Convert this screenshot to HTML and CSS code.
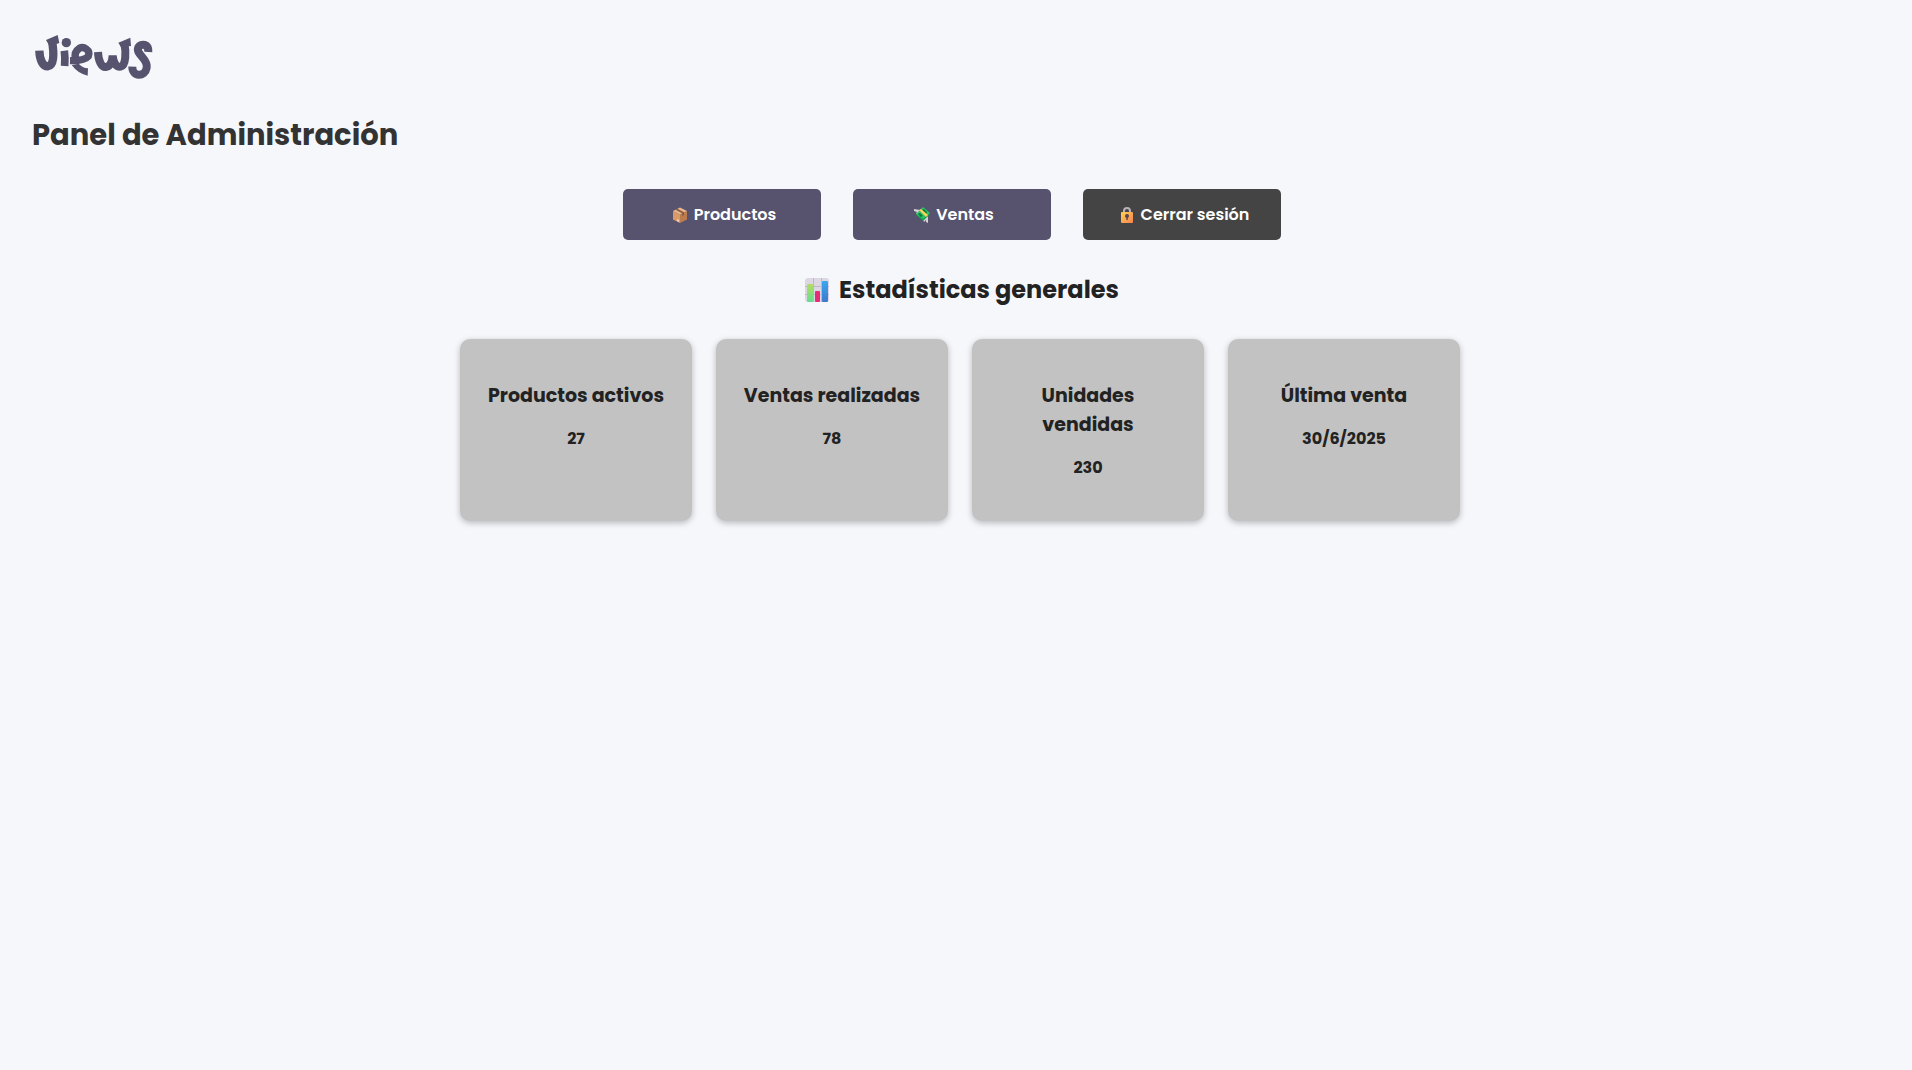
FILE: index.html
```
<!DOCTYPE html>
<html lang="es">
<head>
<meta charset="utf-8">
<meta name="viewport" content="width=device-width, initial-scale=1">
<title>Panel de Administración</title>
<link rel="stylesheet" href="styles.css">
</head>
<body>
<header class="header">
  <svg class="logo" viewBox="0 0 390 150" role="img" aria-label="Views">
    <g fill="none" stroke="currentColor" stroke-width="25">
      <path d="M22 56C23 84 32 103 47 103C66 101 67 68 60 26"/>
      <path d="M97 56Q100 78 98 102" stroke-width="23"/>
      <path d="M114 86Q158 87 169 73C177 54 155 42 142 49C131 56 127 68 131 82" stroke-width="22"/>
      <path d="M198 60C199 88 209 106 221 105C233 104 240 92 242 71C244 94 254 106 266 104C283 100 282 58 277 32" stroke-width="24"/>
      <path d="M349 60C351 36 327 32 319 46C310 67 349 80 344 107C339 136 300 136 301 104" stroke-width="24"/>
    </g>
    <g fill="currentColor">
      <circle cx="103" cy="32" r="14"/>
      <path d="M42 24L77 9L82 33L53 43Z"/>
      <path d="M259 32L295 17L297 42L267 46Z"/>
      <path d="M119 99L140 95Q151 107 168 109L167 131Q137 124 119 99Z"/>
    </g>
  </svg>
  <h1 class="page-title">Panel de Administración</h1>
</header>
<main class="main">
  <nav class="actions" aria-label="Administración">
    <button class="button" type="button">
      <svg class="button-icon" viewBox="0 0 16 16" aria-hidden="true">
        <path fill="#d99a67" d="M1 4L8 7.500V16L1 12.500Z"/>
        <path fill="#bc7c4e" d="M8 7.500L15 4V12.500L8 16Z"/>
        <path fill="#e9b788" d="M1 4L8 0.500L15 4L8 7.500Z"/>
        <path fill="#8b5c45" d="M3.500 2.800L5.500 1.800L12 5.200V8L10 9V6.200Z"/>
        <path fill="#efd5d5" d="M5 12L7 13V15L5 14Z"/>
      </svg>
      Productos
    </button>
    <button class="button" type="button">
      <svg class="button-icon" viewBox="0 0 16 16" aria-hidden="true">
        <path fill="#d5d0d9" d="M0 2L6 3L4 8L2 6.500L3 5L0 4Z"/>
        <path fill="#d5d0d9" d="M9 13L14 9V16L12 15V13L10 15Z"/>
        <path fill="#139b50" d="M2 8L9 1L16 7L9 14Z"/>
        <path fill="#2dc365" d="M2 7L9 0L16 6L9 12Z"/>
        <path fill="#087a3b" d="M8 3L10 2L13 5L12 7ZM4 7L6 6L9 9L7 10Z"/>
        <path fill="#ffd15b" d="M5 3L7 2L14 8L12 10Z"/>
      </svg>
      Ventas
    </button>
    <button class="button button-dark" type="button">
      <svg class="button-icon" viewBox="0 0 16 16" aria-hidden="true">
        <defs><linearGradient id="lock" x1="0" y1="0" x2="1" y2="1"><stop stop-color="#ffd04f"/><stop offset="1" stop-color="#f58252"/></linearGradient></defs>
        <path fill="none" stroke="#bbb1bd" stroke-width="2" d="M5 7V4Q5 1 8 1Q11 1 11 4V7"/>
        <rect x="2" y="5" width="12" height="11" rx="1" fill="url(#lock)"/>
        <circle cx="8" cy="9" r="2" fill="#59434c"/><path stroke="#59434c" stroke-width="1.500" d="M8 9V13"/>
      </svg>
      Cerrar sesión
    </button>
  </nav>
  <h2 class="section-title">
    <svg class="section-icon" viewBox="0 0 24 24" aria-hidden="true">
      <defs>
        <linearGradient id="green" x1="0" y1="0" x2="0" y2="1"><stop stop-color="#b5dc61"/><stop offset="1" stop-color="#62df91"/></linearGradient>
        <linearGradient id="blue" x1="0" y1="0" x2="0" y2="1"><stop stop-color="#37a8ef"/><stop offset="1" stop-color="#4078ce"/></linearGradient>
      </defs>
      <rect width="24" height="24" rx="3" fill="#dcd7e3"/>
      <path fill="none" stroke="#beb7c8" d="M0 8.500H24M0 16.500H24M8.500 0V24M16.500 0V24"/>
      <rect x="2" y="6" width="6" height="18" rx="1" fill="url(#green)"/>
      <rect x="10" y="13" width="5" height="11" rx="1" fill="#e32e75"/>
      <rect x="17" y="3" width="6" height="21" rx="1" fill="url(#blue)"/>
    </svg>
    Estadísticas generales
  </h2>
  <section class="stats" aria-label="Estadísticas generales">
    <article class="card"><h3 class="card-title">Productos activos</h3><p class="card-value">27</p></article>
    <article class="card"><h3 class="card-title">Ventas realizadas</h3><p class="card-value">78</p></article>
    <article class="card"><h3 class="card-title">Unidades<br>vendidas</h3><p class="card-value">230</p></article>
    <article class="card"><h3 class="card-title">Última venta</h3><p class="card-value">30/6/2025</p></article>
  </section>
</main>
</body>
</html>
```
FILE: styles.css
```
* {
  box-sizing: border-box;
}

body {
  margin: 0;
  padding: 32px 24px 32px 32px;
  background: #f6f7fb;
  color: #222;
  font-family: Poppins, Inter, sans-serif;
}

h1, h2, h3, p {
  margin: 0;
}

.logo {
  display: block;
  width: 130px;
  height: 50px;
  color: #57536f;
}

.page-title {
  margin-top: 31px;
  color: #333;
  font-size: 29px;
  line-height: 44px;
}

.actions {
  display: flex;
  flex-wrap: wrap;
  justify-content: center;
  gap: 32px;
  margin-top: 32px;
  padding-right: 16px;
}

.button {
  display: flex;
  align-items: center;
  justify-content: center;
  gap: 6px;
  width: 198px;
  padding: 13px 16px;
  border: 0;
  border-radius: 5px;
  background: #57536f;
  color: #fff;
  font: 600 16px/25px Poppins, Inter, sans-serif;
  cursor: pointer;
}

.button-dark {
  background: #444;
}

.button-icon {
  width: 16px;
  height: 16px;
  margin-left: 4px;
}

.section-title {
  display: flex;
  align-items: center;
  justify-content: center;
  gap: 10px;
  margin-top: 32px;
  font-size: 24px;
  line-height: 36px;
}

.section-icon {
  width: 24px;
  height: 24px;
  margin-left: 4px;
}

.stats {
  display: grid;
  grid-template-columns: repeat(auto-fit, minmax(200px, 1fr));
  gap: 24px;
  max-width: 1000px;
  margin: 31px auto 0;
}

.card {
  padding: 42px 24px 41px;
  border-radius: 10px;
  background: #c2c2c2;
  box-shadow: 0 2px 6px rgba(0, 0, 0, 0.25);
  text-align: center;
}

.card-title {
  font-size: 19px;
  line-height: 29px;
}

.card-value {
  margin-top: 17px;
  font-size: 16px;
  font-weight: 700;
  line-height: 24px;
}
```
